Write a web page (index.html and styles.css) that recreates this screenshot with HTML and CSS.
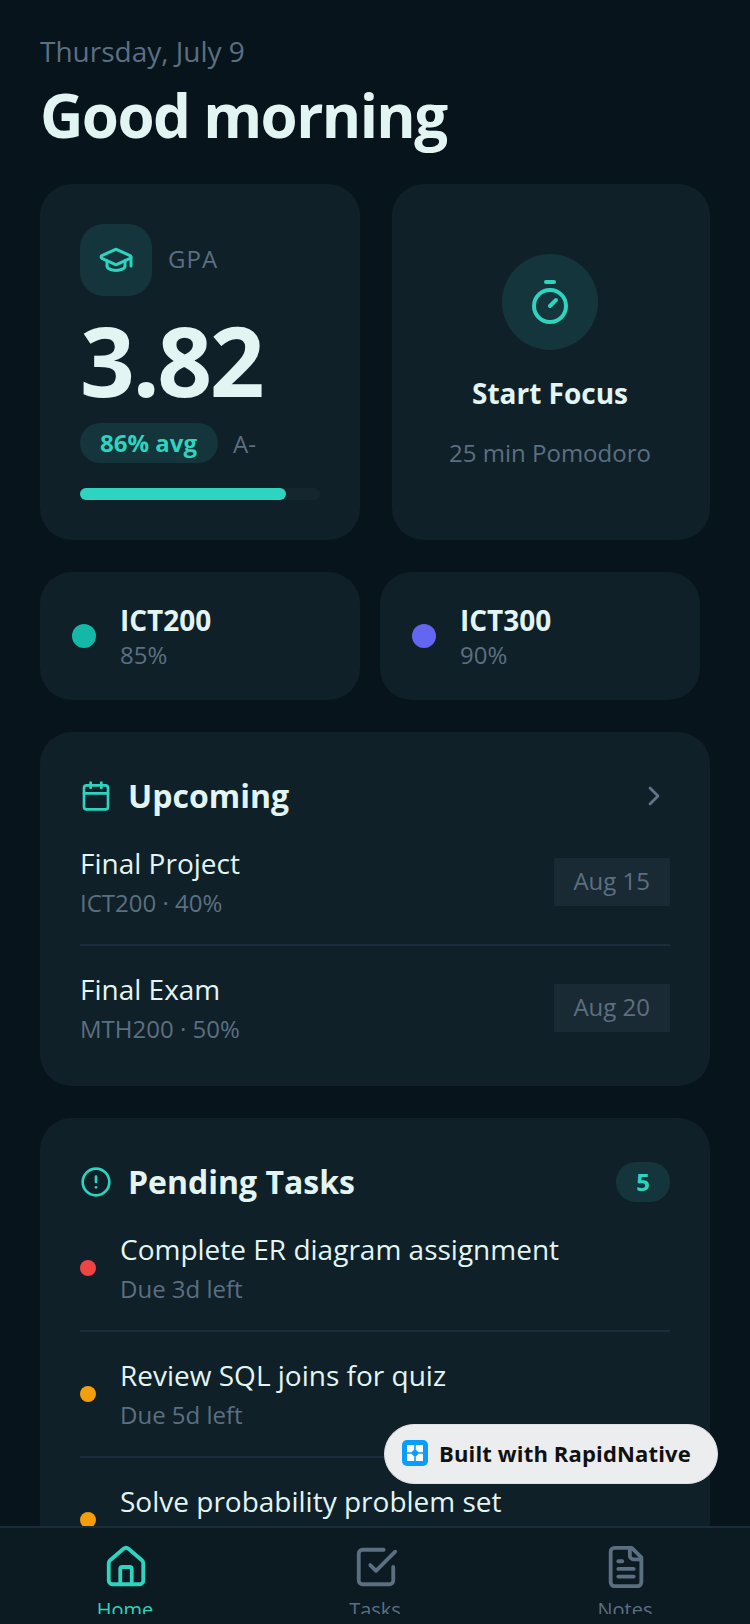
FILE: index.html
```html
<!DOCTYPE html>
<html lang="en">
<head>
    <meta charset="UTF-8">
    <meta name="viewport" content="width=device-width, initial-scale=1.0">
    <title>Good morning</title>
    <link rel="stylesheet" href="styles.css">
</head>
<body>
    <div class="app">
        <main class="screen">
            <p class="date">Thursday, July 9</p>
            <h1>Good morning</h1>

            <div class="top-row">
                <section class="card gpa-card">
                    <div class="gpa-head">
                        <div class="icon-box">
                            <svg width="36" height="36" viewBox="0 0 24 24" fill="none" stroke="#2dd4bf" stroke-width="2" stroke-linecap="round" stroke-linejoin="round"><path d="M21.4 10.9a1 1 0 0 0 0-1.8L13 5.2a2 2 0 0 0-2 0L2.6 9.1a1 1 0 0 0 0 1.8L11 14.8a2 2 0 0 0 2 0z"/><path d="M22 10v6"/><path d="M6 12.5V16a6 3 0 0 0 12 0v-3.5"/></svg>
                        </div>
                        <span class="gpa-label">GPA</span>
                    </div>
                    <div class="gpa-value">3.82</div>
                    <div class="gpa-meta">
                        <span class="pill">86% avg</span>
                        <span class="grade">A-</span>
                    </div>
                    <div class="bar"><div class="bar-fill" style="width: 86%"></div></div>
                </section>

                <section class="card focus-card">
                    <div class="focus-circle">
                        <svg width="48" height="48" viewBox="0 0 24 24" fill="none" stroke="#2dd4bf" stroke-width="2" stroke-linecap="round" stroke-linejoin="round"><line x1="10" y1="2" x2="14" y2="2"/><line x1="12" y1="14" x2="15" y2="11"/><circle cx="12" cy="14" r="8"/></svg>
                    </div>
                    <div class="focus-title">Start Focus</div>
                    <div class="focus-sub">25 min Pomodoro</div>
                </section>
            </div>

            <div class="course-row">
                <div class="course-card">
                    <span class="course-dot dot-teal"></span>
                    <div>
                        <div class="course-name">ICT200</div>
                        <div class="muted">85%</div>
                    </div>
                </div>
                <div class="course-card">
                    <span class="course-dot dot-indigo"></span>
                    <div>
                        <div class="course-name">ICT300</div>
                        <div class="muted">90%</div>
                    </div>
                </div>
            </div>

            <section class="card list-card">
                <div class="list-head">
                    <svg width="32" height="32" viewBox="0 0 24 24" fill="none" stroke="#2dd4bf" stroke-width="2" stroke-linecap="round" stroke-linejoin="round"><path d="M8 2v4"/><path d="M16 2v4"/><rect x="3" y="4" width="18" height="18" rx="2"/><path d="M3 10h18"/></svg>
                    <h2>Upcoming</h2>
                    <svg width="32" height="32" viewBox="0 0 24 24" fill="none" stroke="#64748b" stroke-width="2" stroke-linecap="round" stroke-linejoin="round"><path d="m9 18 6-6-6-6"/></svg>
                </div>
                <div class="list-item">
                    <div class="item-text">
                        <div class="item-title">Final Project</div>
                        <div class="muted">ICT200 · 40%</div>
                    </div>
                    <span class="date-chip">Aug 15</span>
                </div>
                <div class="list-item">
                    <div class="item-text">
                        <div class="item-title">Final Exam</div>
                        <div class="muted">MTH200 · 50%</div>
                    </div>
                    <span class="date-chip">Aug 20</span>
                </div>
            </section>

            <section class="card list-card">
                <div class="list-head">
                    <svg width="32" height="32" viewBox="0 0 24 24" fill="none" stroke="#2dd4bf" stroke-width="2" stroke-linecap="round" stroke-linejoin="round"><circle cx="12" cy="12" r="10"/><line x1="12" y1="8" x2="12" y2="12"/><line x1="12" y1="16" x2="12.01" y2="16"/></svg>
                    <h2>Pending Tasks</h2>
                    <span class="count">5</span>
                </div>
                <div class="list-item task-item">
                    <span class="task-dot dot-red"></span>
                    <div class="item-text">
                        <div class="item-title">Complete ER diagram assignment</div>
                        <div class="muted">Due 3d left</div>
                    </div>
                </div>
                <div class="list-item task-item">
                    <span class="task-dot dot-amber"></span>
                    <div class="item-text">
                        <div class="item-title">Review SQL joins for quiz</div>
                        <div class="muted">Due 5d left</div>
                    </div>
                </div>
                <div class="list-item task-item">
                    <span class="task-dot dot-amber"></span>
                    <div class="item-text">
                        <div class="item-title">Solve probability problem set</div>
                        <div class="muted">Due 6d left</div>
                    </div>
                </div>
            </section>
        </main>

        <nav class="tabs">
            <div class="tab tab-active">
                <svg width="46" height="46" viewBox="0 0 24 24" fill="none" stroke="currentColor" stroke-width="2" stroke-linecap="round" stroke-linejoin="round"><path d="M15 21v-8a1 1 0 0 0-1-1h-4a1 1 0 0 0-1 1v8"/><path d="M3 10a2 2 0 0 1 .709-1.528l7-5.999a2 2 0 0 1 2.582 0l7 5.999A2 2 0 0 1 21 10v9a2 2 0 0 1-2 2H5a2 2 0 0 1-2-2z"/></svg>
                <span class="tab-label">Home</span>
            </div>
            <div class="tab">
                <svg width="46" height="46" viewBox="0 0 24 24" fill="none" stroke="currentColor" stroke-width="2" stroke-linecap="round" stroke-linejoin="round"><path d="m9 11 3 3L22 4"/><path d="M21 12v7a2 2 0 0 1-2 2H5a2 2 0 0 1-2-2V5a2 2 0 0 1 2-2h11"/></svg>
                <span class="tab-label">Tasks</span>
            </div>
            <div class="tab">
                <svg width="46" height="46" viewBox="0 0 24 24" fill="none" stroke="currentColor" stroke-width="2" stroke-linecap="round" stroke-linejoin="round"><path d="M15 2H6a2 2 0 0 0-2 2v16a2 2 0 0 0 2 2h12a2 2 0 0 0 2-2V7z"/><path d="M14 2v4a2 2 0 0 0 2 2h4"/><path d="M10 9H8"/><path d="M16 13H8"/><path d="M16 17H8"/></svg>
                <span class="tab-label">Notes</span>
            </div>
        </nav>

        <div class="built-badge">
            <span class="built-logo">
                <svg width="16" height="16" viewBox="0 0 16 16" fill="#fff"><path d="M0 0h7.2v4.5L4.5 7.2H0z"/><path d="M8.8 0H16v7.2h-4.5L8.8 4.5z"/><path d="M0 8.8h4.5l2.7 2.7V16H0z"/><path d="M11.5 8.8H16V16H8.8v-4.5z"/></svg>
            </span>
            <span>Built with RapidNative</span>
        </div>
    </div>
</body>
</html>
```

FILE: styles.css
```css
:root {
    --color-bg: #08141b;
    --color-card: #0f2029;
    --color-line: #1b2d3a;
    --color-teal: #2dd4bf;
    --color-teal-soft: #14353b;
    --color-text: #e2f5f3;
    --color-muted: #5b6f80;
}

html, body {
    margin: 0;
    padding: 0;
    height: 100%;
}

body {
    background: var(--color-bg);
    color: var(--color-text);
    font-family: "Open Sans", "Noto Sans", sans-serif;
}

.app {
    position: relative;
    width: 750px;
    height: 1624px;
    display: flex;
    flex-direction: column;
    overflow: hidden;
}

.screen {
    flex: 1;
    min-height: 0;
    overflow: hidden;
    padding: 31px 40px 0;
}

.date {
    margin: 0;
    font-size: 28px;
    line-height: 40px;
    color: var(--color-muted);
}

h1 {
    margin: 6px 0 31px;
    font-size: 60px;
    line-height: 76px;
    font-weight: 700;
    letter-spacing: -1.6px;
}

.card {
    background: var(--color-card);
    border-radius: 32px;
    box-sizing: border-box;
}

.top-row {
    display: flex;
    gap: 32px;
    margin-bottom: 32px;
}

.gpa-card {
    width: 320px;
    height: 356px;
    padding: 40px;
}

.gpa-head {
    display: flex;
    align-items: center;
    gap: 16px;
}

.icon-box {
    width: 72px;
    height: 72px;
    border-radius: 24px;
    background: var(--color-teal-soft);
    display: flex;
    align-items: center;
    justify-content: center;
}

.gpa-label {
    font-size: 24px;
    letter-spacing: 1px;
    color: var(--color-muted);
    margin-bottom: 4px;
}

.gpa-value {
    font-size: 96px;
    line-height: 96px;
    font-weight: 700;
    letter-spacing: -2.5px;
    margin-top: 16px;
}

.gpa-meta {
    display: flex;
    align-items: center;
    gap: 15px;
    margin-top: 15px;
}

.pill {
    background: var(--color-teal-soft);
    color: var(--color-teal);
    font-size: 24px;
    font-weight: 700;
    line-height: 40px;
    padding: 0 21px 0 20px;
    border-radius: 20px;
}

.grade {
    font-size: 24px;
    color: var(--color-muted);
}

.bar {
    height: 12px;
    margin-top: 25px;
    border-radius: 6px;
    background: #15262f;
}

.bar-fill {
    height: 100%;
    border-radius: 6px;
    background: var(--color-teal);
}

.focus-card {
    flex: 1;
    height: 356px;
    padding: 70px 2px 0 0;
    display: flex;
    flex-direction: column;
    align-items: center;
}

.focus-circle {
    width: 96px;
    height: 96px;
    border-radius: 50%;
    background: var(--color-teal-soft);
    display: flex;
    align-items: center;
    justify-content: center;
}

.focus-title {
    font-size: 28px;
    line-height: 40px;
    font-weight: 700;
    margin-top: 23px;
}

.focus-sub {
    font-size: 24px;
    line-height: 32px;
    color: var(--color-muted);
    margin-top: 24px;
}

.course-row {
    display: flex;
    gap: 20px;
    margin-bottom: 32px;
}

.course-card {
    flex: 0 0 320px;
    height: 128px;
    box-sizing: border-box;
    padding: 0 32px;
    display: flex;
    align-items: center;
    gap: 24px;
    background: var(--color-card);
    border-radius: 32px;
}

.course-dot {
    width: 24px;
    height: 24px;
    border-radius: 50%;
}

.dot-teal { background: #14b8a6; }
.dot-indigo { background: #6366f1; }
.dot-red { background: #ef4444; }
.dot-amber { background: #f59e0b; }

.course-name {
    font-size: 28px;
    line-height: 38px;
    font-weight: 700;
}

.muted {
    font-size: 24px;
    line-height: 32px;
    color: var(--color-muted);
}

.list-card {
    padding: 40px;
    margin-bottom: 32px;
}

.list-head {
    display: flex;
    align-items: center;
    gap: 16px;
    height: 48px;
}

h2 {
    margin: 0;
    flex: 1;
    font-size: 32px;
    line-height: 44px;
    font-weight: 700;
}

.list-item {
    display: flex;
    align-items: center;
    justify-content: space-between;
    padding: 23px 0 25px;
    border-bottom: 2px solid var(--color-line);
}

.list-item:last-child {
    border-bottom: 0;
    padding-bottom: 1px;
}

.item-title {
    font-size: 28px;
    line-height: 40px;
    margin-bottom: 4px;
}

.date-chip {
    background: #1a2a35;
    color: var(--color-muted);
    font-size: 24px;
    line-height: 46px;
    padding: 0 20px 2px 19px;
    margin-top: 2px;
}

.count {
    background: var(--color-teal-soft);
    color: var(--color-teal);
    font-size: 24px;
    font-weight: 700;
    line-height: 40px;
    padding: 0 20px;
    border-radius: 20px;
}

.task-item {
    justify-content: flex-start;
    gap: 24px;
}

.task-dot {
    width: 16px;
    height: 16px;
    margin-top: 2px;
    border-radius: 50%;
}

.tabs {
    flex: 0 0 98px;
    box-sizing: border-box;
    display: flex;
    background: #0c1a22;
    border-top: 2px solid var(--color-line);
}

.tab {
    flex: 1;
    height: 86px;
    overflow: hidden;
    box-sizing: border-box;
    padding-top: 16px;
    display: flex;
    flex-direction: column;
    align-items: center;
    color: var(--color-muted);
}

.tab svg {
    flex-shrink: 0;
    margin-left: 2px;
}

.tab-label {
    flex-shrink: 0;
    margin-top: 6px;
    font-size: 20px;
    line-height: 28px;
}

.tab-active {
    color: var(--color-teal);
}

.built-badge {
    position: absolute;
    left: 384px;
    top: 1424px;
    width: 334px;
    height: 60px;
    box-sizing: border-box;
    padding: 0 0 2px 17px;
    display: flex;
    align-items: center;
    gap: 11px;
    border: 1px solid #dde1e4;
    border-radius: 30px;
    background: #ebedef;
    color: #111;
    font-size: 22px;
    font-weight: 700;
    letter-spacing: 0.15px;
}

.built-logo {
    width: 26px;
    height: 26px;
    border-radius: 5px;
    background: #0a9cff;
    display: flex;
    align-items: center;
    justify-content: center;
}
```
